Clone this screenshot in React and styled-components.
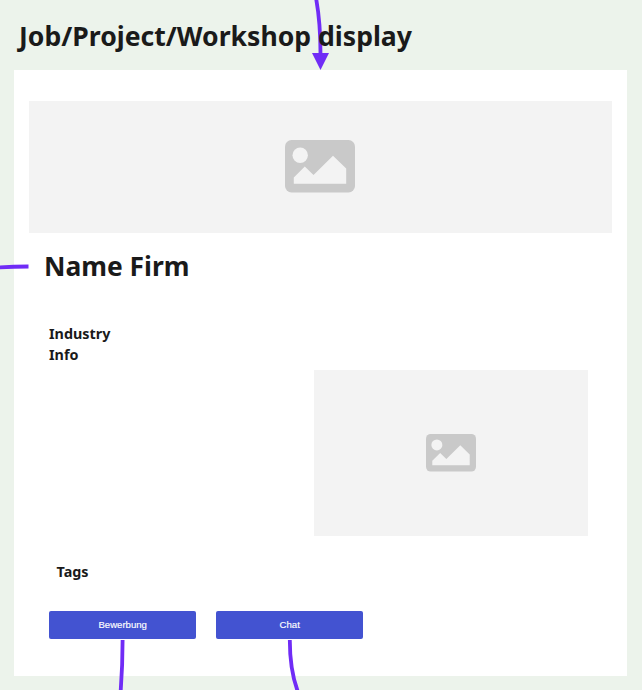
import React from "react";
import styled, { createGlobalStyle } from "styled-components";

const GlobalStyle = createGlobalStyle`
  * { box-sizing: border-box; }
  body { margin: 0; background: #ecf3eb; overflow: hidden; }
`;

const Board = styled.main`
  position: relative;
  isolation: isolate;
  display: flex;
  flex-direction: column;
  width: 642px;
  height: 690px;
  padding: 0 15px 0 14px;
  overflow: hidden;
  background: #ecf3eb;
  color: #1a1a1a;
  font-family: "Noto Sans", sans-serif;
`;

const BoardTitle = styled.h1`
  position: relative;
  z-index: 2;
  height: 70px;
  margin: 0;
  padding: 17px 0 0 5px;
  font-size: 26.6px;
  line-height: 38px;
  font-weight: 700;
  white-space: nowrap;
`;

const Card = styled.section`
  display: flex;
  flex-direction: column;
  height: 606.4px;
  padding: 31px 15px 0;
  background: #fff;
`;

const Placeholder = styled.div`
  display: flex;
  flex: none;
  align-items: center;
  justify-content: center;
  width: ${(p) => p.$width}px;
  height: ${(p) => p.$height}px;
  padding: ${(p) => p.$inset || "0"};
  background: #f3f3f3;
`;

const Details = styled.div`
  display: flex;
  flex-direction: column;
  padding: 0 24px 0 15px;
`;

const FirmName = styled.h2`
  margin: 14px 0 38px;
  font-size: 26.4px;
  line-height: 38px;
  font-weight: 700;
`;

const Label = styled.div`
  padding-left: ${(p) => p.$indent}px;
  font-size: 14.35px;
  line-height: 21px;
  font-weight: 700;
`;

const Media = styled.div`
  display: flex;
  justify-content: flex-end;
  margin: 4.5px 0 25px;
`;

const Actions = styled.div`
  display: flex;
  gap: 19.6px;
  margin-top: 29px;
  padding-left: 5px;
`;

const Button = styled.button`
  width: 147.4px;
  height: 28.6px;
  padding: 0;
  border: 0;
  border-radius: 2px;
  background: #4353d1;
  color: #fff;
  font: 9.6px/28px "Liberation Sans", Arial, sans-serif;
  -webkit-text-stroke: 0.15px #fff;
`;

const Connectors = styled.svg`
  position: absolute;
  inset: 0;
  z-index: 1;
  pointer-events: none;
`;

function PictureIcon({ width }) {
  return (
    <svg width={width} height={width * 0.75} viewBox="0 0 70 52.5" aria-hidden="true">
      <rect width="70" height="52.5" rx="6.5" fill="#c9c9c9" />
      <circle cx="15.2" cy="15.3" r="7.7" fill="#f3f3f3" />
      <path d="M8.8 43.8V37.4L19.8 26.6L28.5 35L48 15.8L61.2 28.6V43.8Z" fill="#f3f3f3" />
    </svg>
  );
}

export default function App() {
  return (
    <>
      <GlobalStyle />
      <Board>
        <BoardTitle>Job/Project/Workshop display</BoardTitle>
        <Card>
          <Placeholder $width={583} $height={132} $inset="0 1.4px 1.5px 0">
            <PictureIcon width={70} />
          </Placeholder>
          <Details>
            <FirmName>Name Firm</FirmName>
            <Label $indent={5}>Industry</Label>
            <Label $indent={5}>Info</Label>
            <Media>
              <Placeholder $width={274.3} $height={166} $inset="0.5px 0 0 0.6px">
                <PictureIcon width={50} />
              </Placeholder>
            </Media>
            <Label $indent={12.5}>Tags</Label>
            <Actions>
              <Button>Bewerbung</Button>
              <Button>Chat</Button>
            </Actions>
          </Details>
        </Card>
        <Connectors width="642" height="690" viewBox="0 0 642 690" aria-hidden="true">
          <g fill="none" stroke="#702cf6" strokeWidth="3.8">
            <path d="M316 -2C319 14 320.5 32 320.5 54" />
            <path d="M-2 267.5Q12 266.5 28.5 266.5" />
            <path d="M122.6 640Q122.6 665 120.6 692" />
            <path d="M289.8 640C289.8 660 291.5 675 298 692" />
          </g>
          <path d="M312 53H329L320.5 70Z" fill="#702cf6" />
        </Connectors>
      </Board>
    </>
  );
}
